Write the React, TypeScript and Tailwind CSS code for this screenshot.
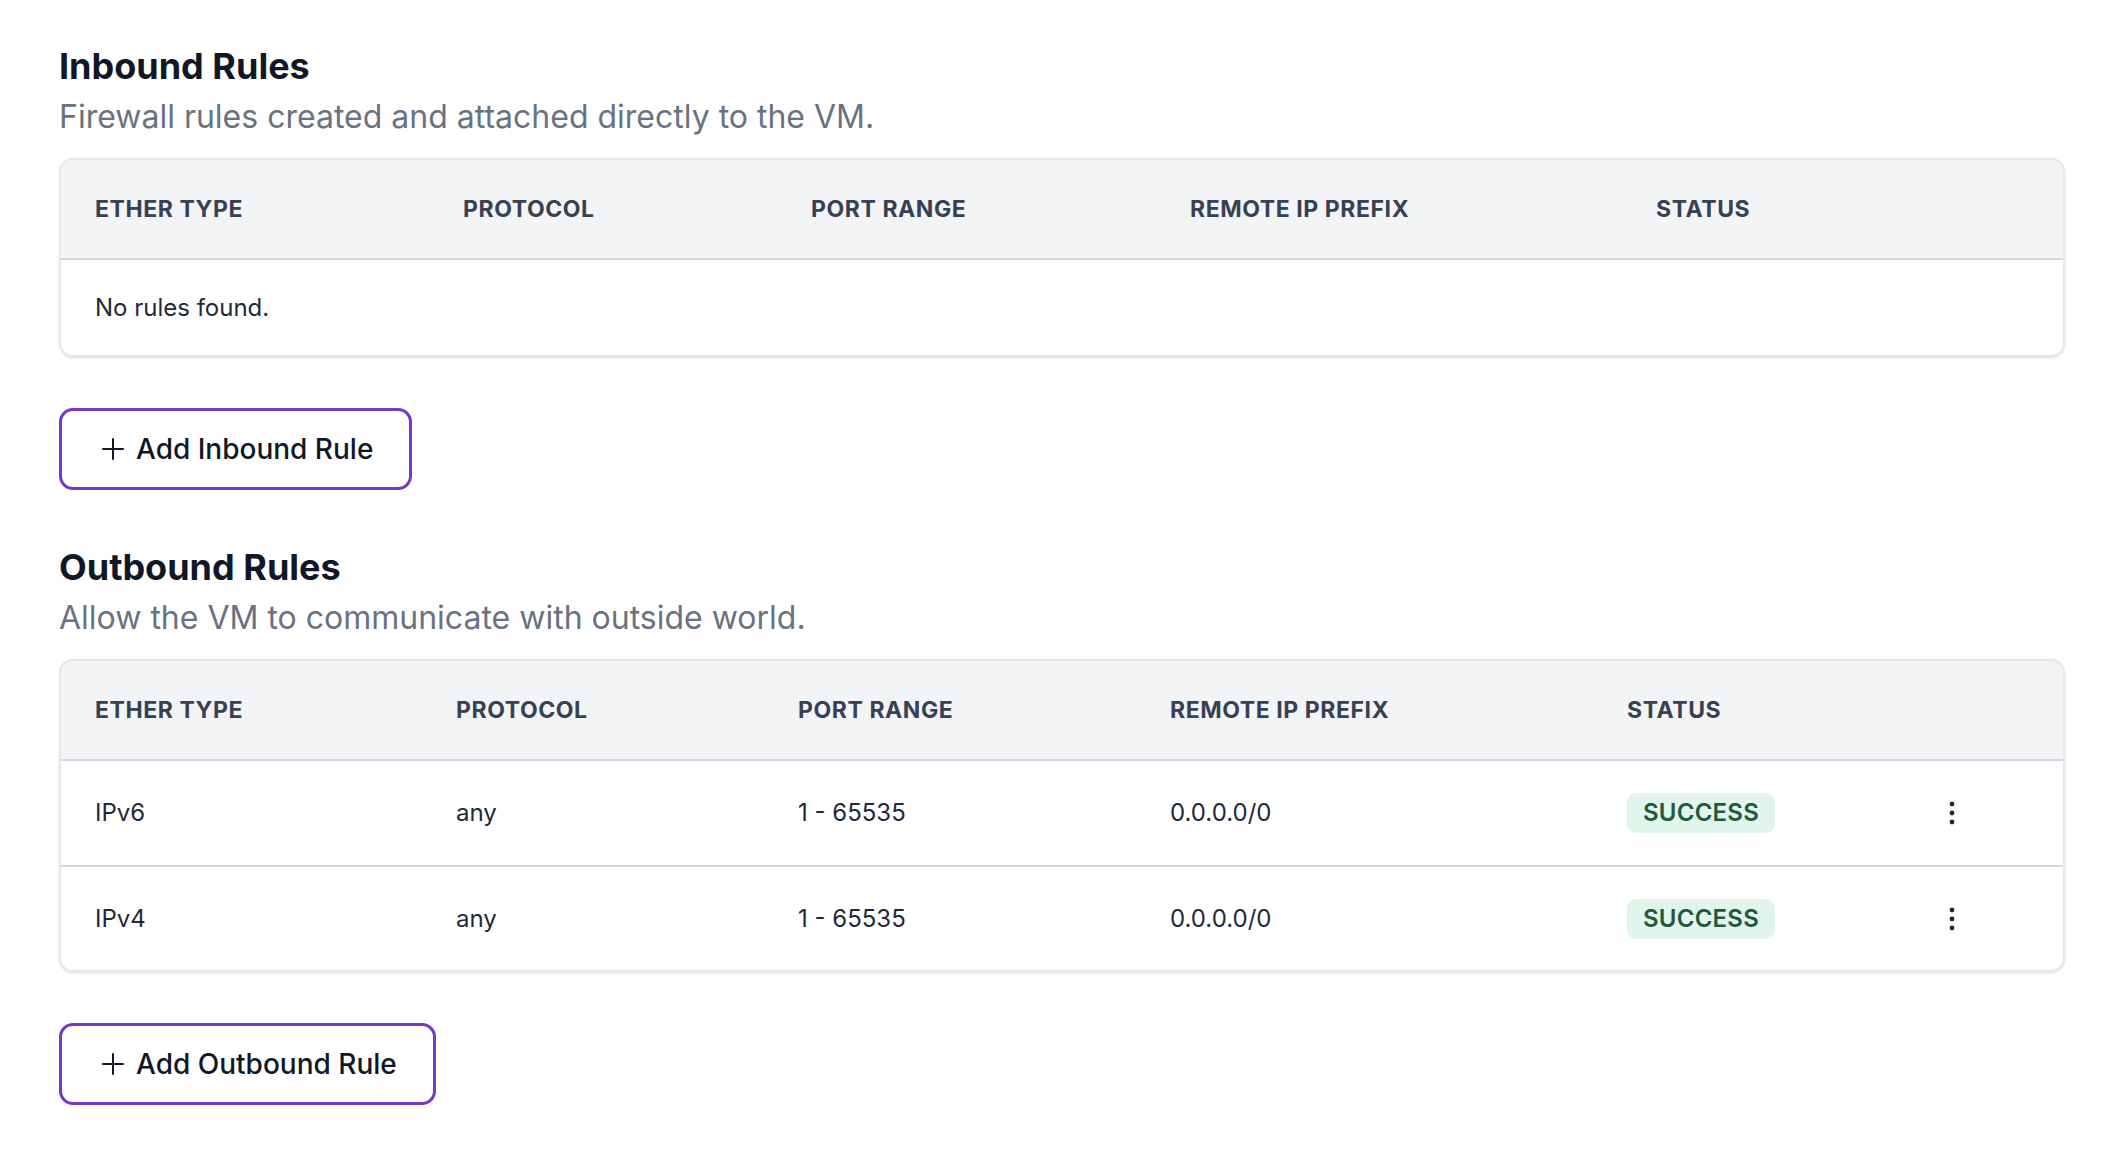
import React from "react";

const PlusIcon = () => (
  <svg width="22" height="22" viewBox="0 0 22 22" fill="none" stroke="#111827" strokeWidth="2" strokeLinecap="round">
    <line x1="11" y1="1" x2="11" y2="21" />
    <line x1="1" y1="11" x2="21" y2="11" />
  </svg>
);

const Dots = () => (
  <svg width="24" height="24" viewBox="0 0 24 24" fill="#1f2937">
    <circle cx="12" cy="3" r="2.4" />
    <circle cx="12" cy="12" r="2.4" />
    <circle cx="12" cy="21" r="2.4" />
  </svg>
);

const Badge = () => (
  <span className="inline-flex items-center h-[40px] px-[16px] rounded-[9px] bg-[#e1f5ec] text-[#1f5a3d] text-[24px] font-semibold tracking-[0.01em]">
    SUCCESS
  </span>
);

const headers = ["ETHER TYPE", "PROTOCOL", "PORT RANGE", "REMOTE IP PREFIX", "STATUS"];

function AddButton({ label }: { label: string }) {
  return (
    <button className="mt-[51px] flex items-center gap-[12px] h-[82px] pl-[40px] pr-[36px] border-[3px] border-[#7737c9] rounded-[14px] bg-white text-[28px] font-medium text-gray-900">
      <PlusIcon />
      <span>{label}</span>
    </button>
  );
}

function SectionHead({ title, sub }: { title: string; sub: string }) {
  return (
    <>
      <h2 className="text-[36px] leading-[40px] font-bold text-gray-900">{title}</h2>
      <p className="mt-[13px] text-[32px] leading-[36px] text-gray-500">{sub}</p>
    </>
  );
}

export default function App() {
  const rows = [
    { ether: "IPv6", proto: "any", port: "1 - 65535", prefix: "0.0.0.0/0" },
    { ether: "IPv4", proto: "any", port: "1 - 65535", prefix: "0.0.0.0/0" },
  ];
  return (
    <div className="min-h-screen bg-white pl-[59px] pr-[63px] pt-[46px] pb-[40px] text-gray-900" style={{ fontFamily: "Inter, 'Noto Sans', sans-serif" }}>
      <SectionHead title="Inbound Rules" sub="Firewall rules created and attached directly to the VM." />
      <div className="mt-[23px] border-2 border-gray-200 rounded-[14px] shadow-sm overflow-hidden">
        <div className="grid grid-cols-[368px_348px_379px_466px_1fr] h-[98px] items-center bg-gray-100 border-b-2 border-[#d0d8e3] box-content">
          {headers.map((h) => (
            <div key={h} className="pl-[34px] text-[23px] font-bold tracking-wide text-gray-700">{h}</div>
          ))}
        </div>
        <div className="h-[95px] flex items-center pl-[34px] text-[24px] text-gray-800">No rules found.</div>
      </div>
      <AddButton label="Add Inbound Rule" />

      <div className="mt-[57px]">
        <SectionHead title="Outbound Rules" sub="Allow the VM to communicate with outside world." />
      </div>
      <div className="mt-[23px] border-2 border-gray-200 rounded-[14px] shadow-sm overflow-hidden">
        <div className="grid grid-cols-[361px_342px_372px_457px_331px_1fr] h-[98px] items-center bg-gray-100 border-b-2 border-[#d0d8e3] box-content">
          {headers.map((h) => (
            <div key={h} className="pl-[34px] text-[23px] font-bold tracking-wide text-gray-700">{h}</div>
          ))}
          <div />
        </div>
        {rows.map((r, i) => (
          <div
            key={r.ether}
            className={`grid grid-cols-[361px_342px_372px_457px_331px_1fr] items-center text-[24px] text-gray-800 ${i === 0 ? "h-[104px] border-b-2 border-[#d0d8e3] box-content" : "h-[103px]"}`}
          >
            <div className="pl-[34px]">{r.ether}</div>
            <div className="pl-[34px]">{r.proto}</div>
            <div className="pl-[34px]">{r.port}</div>
            <div className="pl-[34px]">{r.prefix}</div>
            <div className="pl-[34px]"><Badge /></div>
            <div className="pl-[16px] flex items-center"><Dots /></div>
          </div>
        ))}
      </div>
      <AddButton label="Add Outbound Rule" />
    </div>
  );
}
